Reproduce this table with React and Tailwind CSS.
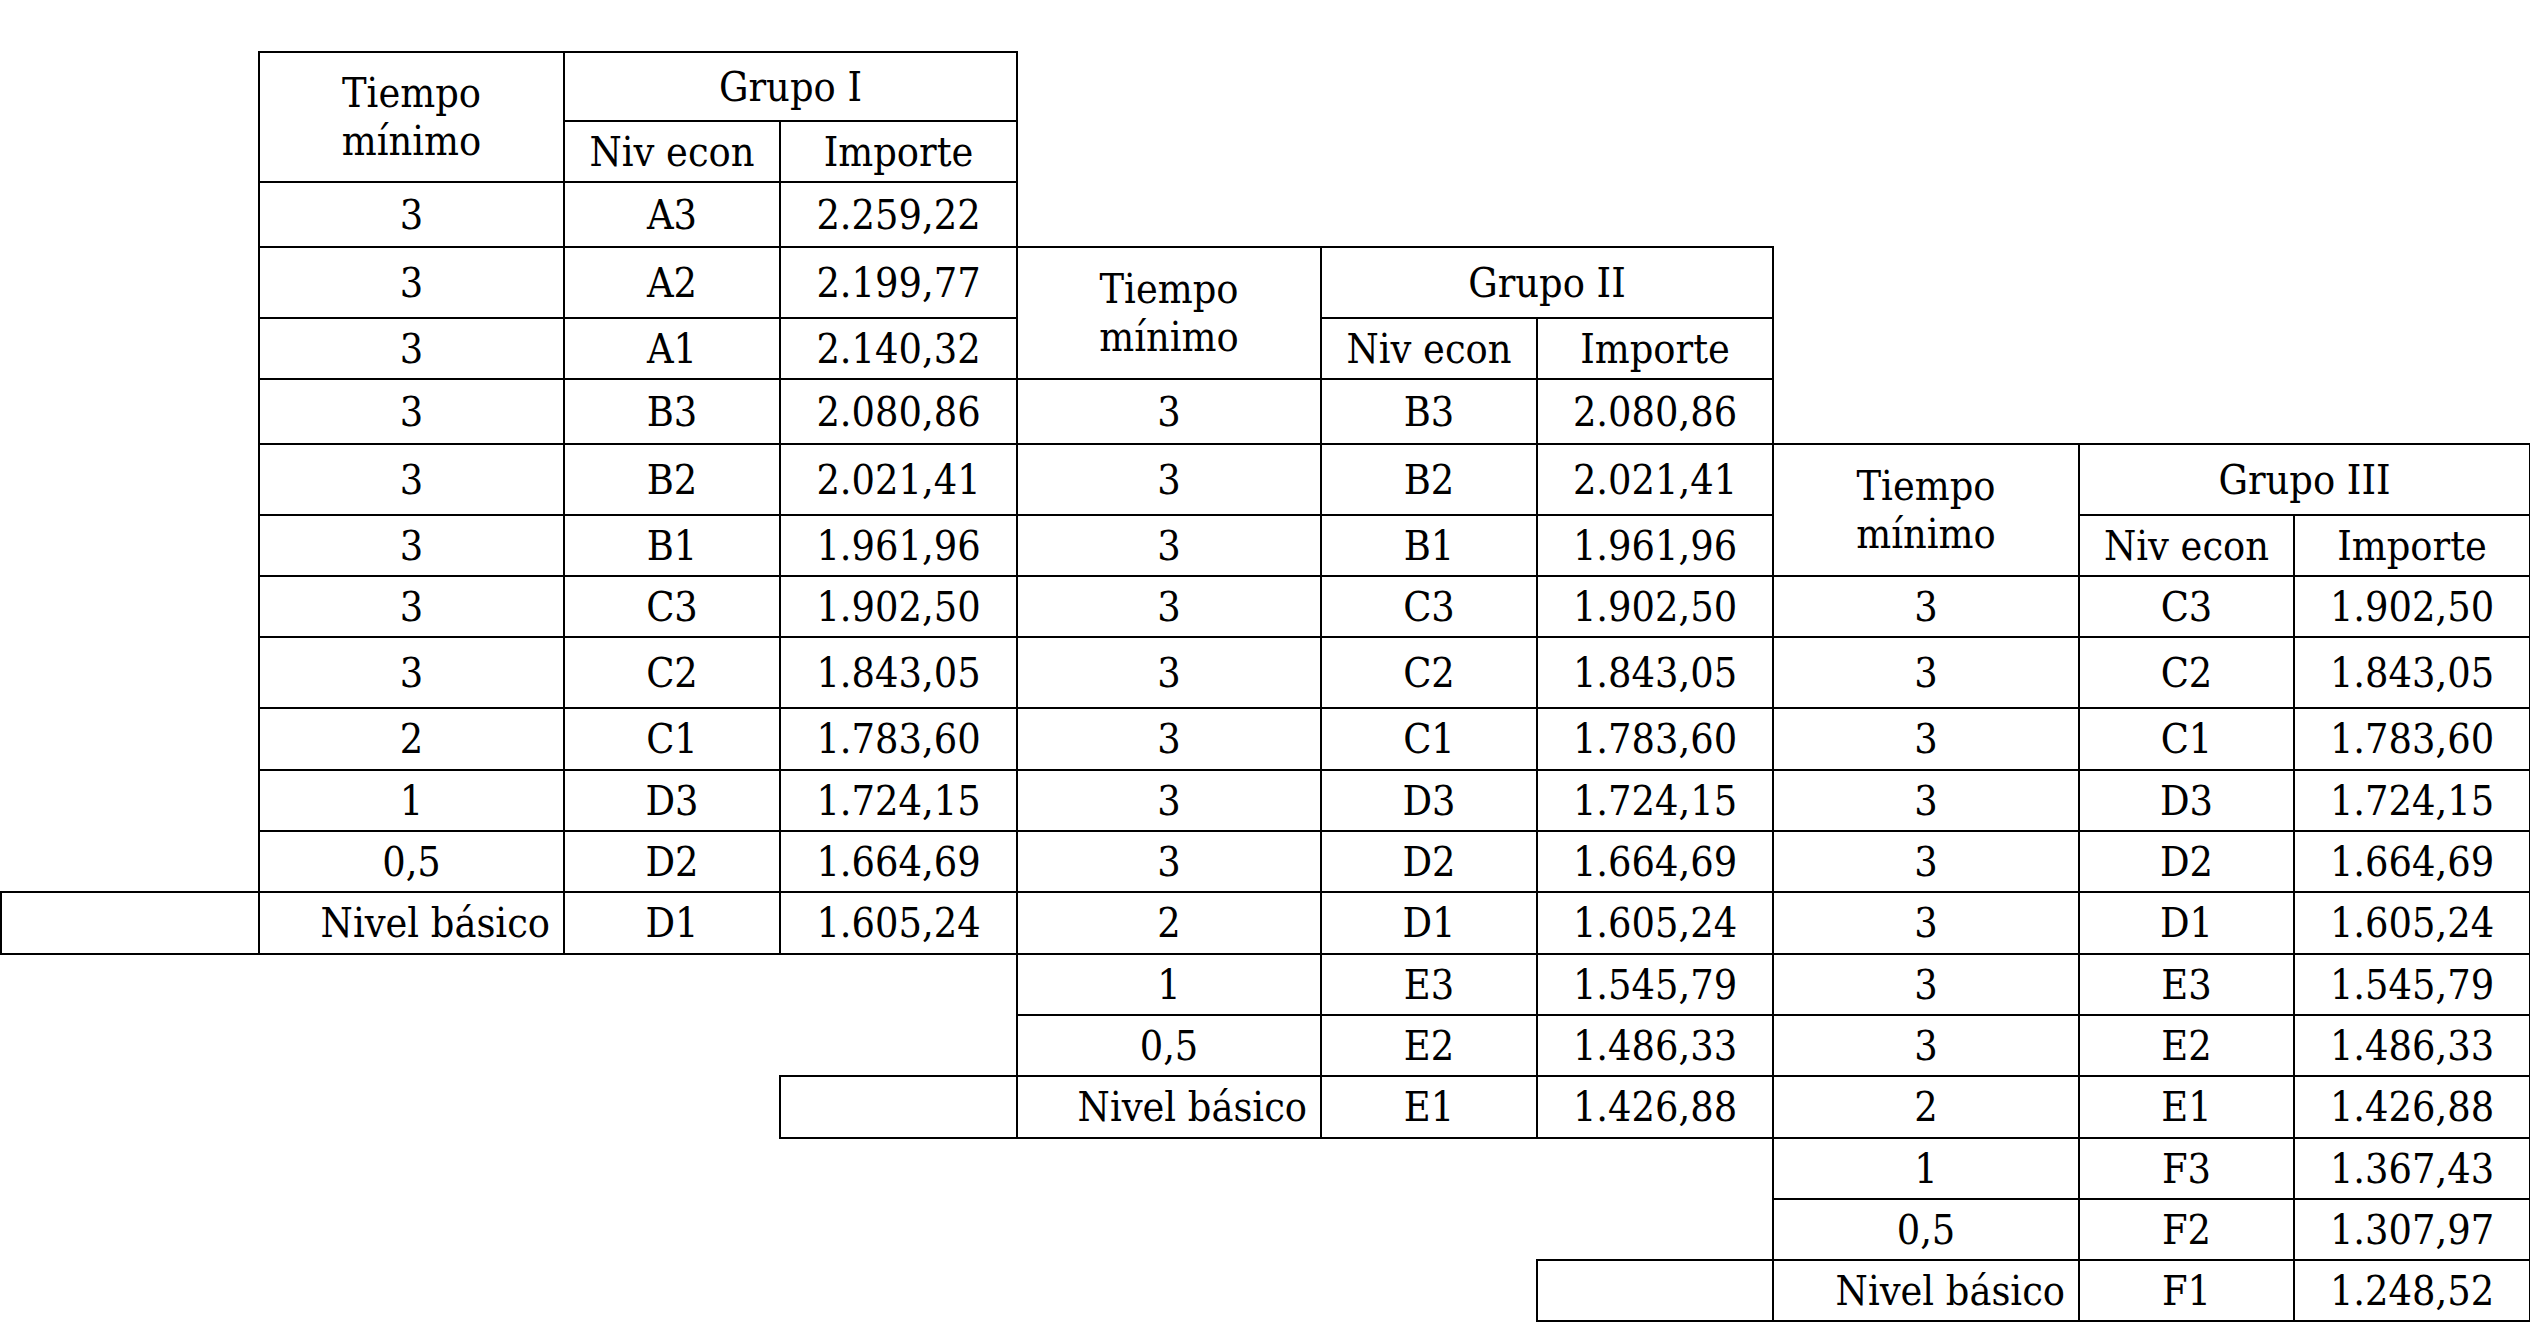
import React from "react";

const rowH = [
  "h-[69px]", "h-[61px]", "h-[65px]", "h-[71px]", "h-[61px]", "h-[65px]", "h-[71px]",
  "h-[61px]", "h-[61px]", "h-[71px]", "h-[62px]", "h-[61px]", "h-[61px]", "h-[62px]",
  "h-[61px]", "h-[61px]", "h-[62px]", "h-[61px]", "h-[61px]", "h-[61px]",
];

function Cell({children, right, ...rest}) {
  return (
    <td
      className={
        right
          ? "border-2 border-black p-0 text-right pr-[13px] align-middle"
          : "border-2 border-black p-0 text-center align-middle"
      }
      {...rest}
    >
      {children}
    </td>
  );
}

const Empty = ({n = 1}) =>
  Array.from({length: n}).map((_, i) => <td key={i} className="p-0" />);

// one group's body row: tiempo, nivel, importe
function Trio({t, n, v}) {
  const basic = t === "Nivel básico";
  return (
    <>
      <Cell right={basic}>{t}</Cell>
      <Cell>{n}</Cell>
      <Cell>{v}</Cell>
    </>
  );
}

const Head = ({title}) => (
  <>
    <Cell rowSpan={2}>
      Tiempo
      <br />
      mínimo
    </Cell>
    <Cell colSpan={2}>{title}</Cell>
  </>
);

const SubHead = () => (
  <>
    <Cell>Niv econ</Cell>
    <Cell>Importe</Cell>
  </>
);

const g1 = [
  ["3", "A3", "2.259,22"],
  ["3", "A2", "2.199,77"],
  ["3", "A1", "2.140,32"],
  ["3", "B3", "2.080,86"],
  ["3", "B2", "2.021,41"],
  ["3", "B1", "1.961,96"],
  ["3", "C3", "1.902,50"],
  ["3", "C2", "1.843,05"],
  ["2", "C1", "1.783,60"],
  ["1", "D3", "1.724,15"],
  ["0,5", "D2", "1.664,69"],
  ["Nivel básico", "D1", "1.605,24"],
];

const g2 = [
  ["3", "B3", "2.080,86"],
  ["3", "B2", "2.021,41"],
  ["3", "B1", "1.961,96"],
  ["3", "C3", "1.902,50"],
  ["3", "C2", "1.843,05"],
  ["3", "C1", "1.783,60"],
  ["3", "D3", "1.724,15"],
  ["3", "D2", "1.664,69"],
  ["2", "D1", "1.605,24"],
  ["1", "E3", "1.545,79"],
  ["0,5", "E2", "1.486,33"],
  ["Nivel básico", "E1", "1.426,88"],
];

const g3 = [
  ["3", "C3", "1.902,50"],
  ["3", "C2", "1.843,05"],
  ["3", "C1", "1.783,60"],
  ["3", "D3", "1.724,15"],
  ["3", "D2", "1.664,69"],
  ["3", "D1", "1.605,24"],
  ["3", "E3", "1.545,79"],
  ["3", "E2", "1.486,33"],
  ["2", "E1", "1.426,88"],
  ["1", "F3", "1.367,43"],
  ["0,5", "F2", "1.307,97"],
  ["Nivel básico", "F1", "1.248,52"],
];

const tr = (g, i) => <Trio t={g[i][0]} n={g[i][1]} v={g[i][2]} />;

export default function App() {
  const rows = [];
  for (let r = 0; r < 20; r++) {
    let cells;
    // group I occupies rows 0-13, group II rows 3-16, group III rows 6-19
    const lead = r === 13 ? <Cell /> : <Empty />;
    let c1;
    if (r === 0) c1 = <Head title="Grupo I" />;
    else if (r === 1) c1 = <SubHead />;
    else if (r <= 13) c1 = tr(g1, r - 2);
    else if (r === 16) c1 = (<><Empty n={2} /><Cell /></>);
    else c1 = <Empty n={3} />;

    let c2;
    if (r < 3) c2 = <Empty n={3} />;
    else if (r === 3) c2 = <Head title="Grupo II" />;
    else if (r === 4) c2 = <SubHead />;
    else if (r <= 16) c2 = tr(g2, r - 5);
    else if (r === 19) c2 = (<><Empty n={2} /><Cell /></>);
    else c2 = <Empty n={3} />;

    let c3;
    if (r < 6) c3 = <Empty n={3} />;
    else if (r === 6) c3 = <Head title="Grupo III" />;
    else if (r === 7) c3 = <SubHead />;
    else c3 = tr(g3, r - 8);

    cells = (
      <>
        {r === 13 ? lead : r > 13 ? null : lead}
        {r > 13 && <Empty />}
        {c1}
        {c2}
        {c3}
      </>
    );
    rows.push(
      <tr key={r} className={rowH[r]}>
        {cells}
      </tr>
    );
  }

  return (
    <div className="min-h-screen bg-white pt-[51px] text-black">
      <table className="table-fixed border-collapse font-['DejaVu_Serif_Condensed','DejaVu_Serif',serif] font-stretch-condensed text-[41px] leading-[48px] w-[2529px]">
        <colgroup>
          <col className="w-[258px]" />
          <col className="w-[305px]" />
          <col className="w-[216px]" />
          <col className="w-[237px]" />
          <col className="w-[304px]" />
          <col className="w-[216px]" />
          <col className="w-[236px]" />
          <col className="w-[306px]" />
          <col className="w-[215px]" />
          <col className="w-[236px]" />
        </colgroup>
        <tbody>{rows}</tbody>
      </table>
    </div>
  );
}
